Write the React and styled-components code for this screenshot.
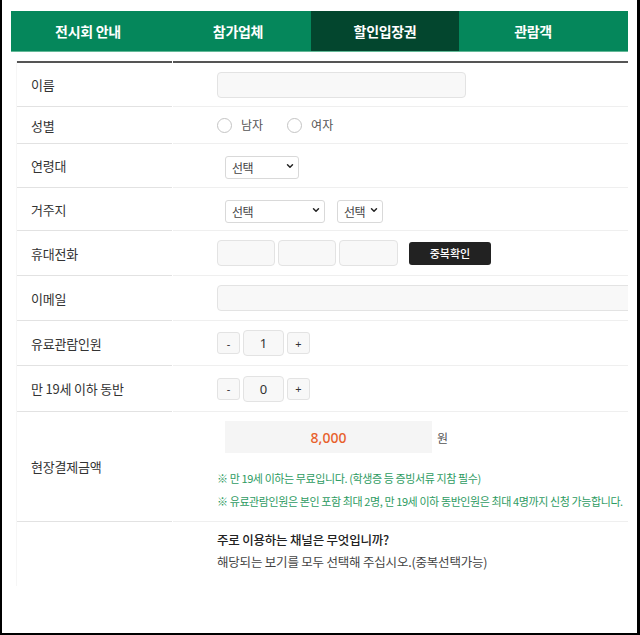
import React from "react";
import styled, { createGlobalStyle } from "styled-components";
import { ChevronDown } from "lucide-react";

const GlobalStyle = createGlobalStyle`
  body {
    margin: 0;
    background: #fff;
    font-family: "Noto Sans CJK KR", "Noto Sans", sans-serif;
  }
  * {
    box-sizing: border-box;
  }
`;

const tabs = [
  { label: "전시회 안내" },
  { label: "참가업체" },
  { label: "할인입장권", active: true },
  { label: "관람객" },
];

const App = () => {
  return (
    <Frame>
      <GlobalStyle />
      <TabBar>
        {tabs.map((t) => (
          <Tab key={t.label} $active={t.active}>
            {t.label}
          </Tab>
        ))}
      </TabBar>

      <Table>
        <Row $first $h={46}>
          <Label>이름</Label>
          <Value>
            <TextInput $w={249} />
          </Value>
        </Row>

        <Row $h={37}>
          <Label>성별</Label>
          <Value>
            <RadioGroup>
              <RadioLabel>
                <Radio type="radio" name="gender" />
                남자
              </RadioLabel>
              <RadioLabel>
                <Radio type="radio" name="gender" />
                여자
              </RadioLabel>
            </RadioGroup>
          </Value>
        </Row>

        <Row $h={44}>
          <Label>연령대</Label>
          <Value>
            <SelectRow>
              <SelectWrap $w={74}>
                <Select>
                  <option>선택</option>
                </Select>
                <ChevronDown size={10} strokeWidth={3.5} />
              </SelectWrap>
            </SelectRow>
          </Value>
        </Row>

        <Row $h={43}>
          <Label>거주지</Label>
          <Value>
            <SelectRow>
              <SelectWrap $w={100}>
                <Select>
                  <option>선택</option>
                </Select>
                <ChevronDown size={10} strokeWidth={3.5} />
              </SelectWrap>
              <SelectWrap $w={46}>
                <Select>
                  <option>선택</option>
                </Select>
                <ChevronDown size={10} strokeWidth={3.5} />
              </SelectWrap>
            </SelectRow>
          </Value>
        </Row>

        <Row $h={45}>
          <Label>휴대전화</Label>
          <Value>
            <Inline>
              <TextInput $w={58} />
              <TextInput $w={58} />
              <TextInput $w={59} />
              <DarkButton>중복확인</DarkButton>
            </Inline>
          </Value>
        </Row>

        <Row $h={45}>
          <Label>이메일</Label>
          <Value>
            <TextInput $w={420} />
          </Value>
        </Row>

        <Row $h={45}>
          <Label>유료관람인원</Label>
          <Value>
            <Inline>
              <StepButton>-</StepButton>
              <CountInput defaultValue="1" />
              <StepButton>+</StepButton>
            </Inline>
          </Value>
        </Row>

        <Row $h={46}>
          <Label>만 19세 이하 동반</Label>
          <Value>
            <Inline>
              <StepButton>-</StepButton>
              <CountInput defaultValue="0" />
              <StepButton>+</StepButton>
            </Inline>
          </Value>
        </Row>

        <Row $h={110}>
          <Label>현장결제금액</Label>
          <Value $column $pad="9px">
            <AmountLine>
              <AmountBox>8,000</AmountBox>
              <Unit>원</Unit>
            </AmountLine>
            <Notes>
              <Note>※ 만 19세 이하는 무료입니다. (학생증 등 증빙서류 지참 필수)</Note>
              <Note>
                ※ 유료관람인원은 본인 포함 최대 2명, 만 19세 이하 동반인원은 최대
                4명까지 신청 가능합니다.
              </Note>
            </Notes>
          </Value>
        </Row>

        <Row $last $h={64}>
          <Label />
          <Value $column $pad="7px">
            <Question>주로 이용하는 채널은 무엇입니까?</Question>
            <Hint>해당되는 보기를 모두 선택해 주십시오.(중복선택가능)</Hint>
          </Value>
        </Row>
      </Table>
    </Frame>
  );
};

const Frame = styled.div`
  width: 640px;
  height: 635px;
  border-left: 2px solid #000;
  border-right: 3px solid #000;
  border-bottom: 2px solid #000;
  padding: 11px 8px 0 9px;
  overflow: hidden;
`;

const TabBar = styled.div`
  display: grid;
  grid-template-columns: 154px 146px 148px 148px;
  width: 617px;
  background: #05875b;
  border-bottom: 1px solid #62b896;
`;

const Tab = styled.div`
  height: 40px;
  display: flex;
  align-items: center;
  justify-content: center;
  color: #fff;
  font-size: 14px;
  font-weight: 700;
  letter-spacing: -0.3px;
  background: ${(p) => (p.$active ? "#03462e" : "transparent")};
`;

const Table = styled.div`
  margin: 9px 0 0 5px;
  width: 612px;
  border-left: 1px solid #f6f6f6;
`;

const Row = styled.div`
  display: grid;
  grid-template-columns: 155px 1fr;
  column-gap: 1px;

  & > div {
    height: ${(p) => p.$h}px;
    border-top: ${(p) => (p.$first ? "2px solid #555" : "none")};
    border-bottom: ${(p) => (p.$last ? "none" : "1px solid #efefef")};
  }
  & > div:first-child {
    border-bottom-color: #e2e2e2;
  }
`;

const Label = styled.div`
  display: flex;
  align-items: center;
  padding-left: 14px;
  font-size: 13px;
  color: #333;
  letter-spacing: -0.2px;
`;

const Value = styled.div`
  display: flex;
  flex-direction: ${(p) => (p.$column ? "column" : "row")};
  align-items: ${(p) => (p.$column ? "flex-start" : "center")};
  padding-top: ${(p) => p.$pad || "0"};
  padding-left: 44px;
  min-width: 0;
  overflow: hidden;
`;

const TextInput = styled.input`
  width: ${(p) => p.$w}px;
  height: 26px;
  flex-shrink: 0;
  background: #f8f8f8;
  border: 1px solid #e3e3e3;
  border-radius: 4px;
  outline: none;
`;

const Inline = styled.div`
  display: flex;
  align-items: center;
  gap: 3px;
`;

const RadioGroup = styled.div`
  display: flex;
  align-items: center;
  gap: 24px;
`;

const RadioLabel = styled.label`
  display: flex;
  align-items: center;
  gap: 9px;
  font-size: 12px;
  line-height: 16px;
  color: #555;
`;

const Radio = styled.input`
  appearance: none;
  margin: 0;
  width: 15px;
  height: 15px;
  border: 1px solid #c4c4c4;
  border-radius: 50%;
  background: #fff;
`;

const SelectRow = styled.div`
  display: flex;
  align-items: center;
  gap: 12px;
  margin-left: 8px;
`;

const SelectWrap = styled.div`
  position: relative;
  width: ${(p) => p.$w}px;
  height: 23px;

  svg {
    position: absolute;
    right: 4px;
    top: 7px;
    color: #222;
    pointer-events: none;
  }
`;

const Select = styled.select`
  appearance: none;
  width: 100%;
  height: 100%;
  padding: 0 0 0 6px;
  border: 1px solid #d9d9d9;
  border-radius: 3px;
  background: #fff;
  font-family: "Noto Sans CJK KR", sans-serif;
  font-size: 12px;
  letter-spacing: -0.5px;
  color: #444;
  outline: none;
`;

const DarkButton = styled.button`
  margin-left: 8px;
  width: 82px;
  height: 23px;
  border: none;
  border-radius: 3px;
  background: #222;
  color: #fff;
  font-family: "Noto Sans CJK KR", sans-serif;
  font-size: 11px;
  font-weight: 500;
`;

const StepButton = styled.button`
  width: 23px;
  height: 22px;
  padding: 0;
  border: 1px solid #e3e3e3;
  border-radius: 3px;
  background: #f8f8f8;
  color: #333;
  font-family: "Noto Sans", sans-serif;
  font-size: 11px;
`;

const CountInput = styled.input`
  width: 41px;
  height: 26px;
  border: 1px solid #e3e3e3;
  border-radius: 4px;
  background: #f8f8f8;
  text-align: center;
  font-family: "Noto Sans", sans-serif;
  font-size: 13px;
  color: #333;
  outline: none;
`;

const AmountLine = styled.div`
  display: flex;
  align-items: center;
  gap: 5px;
  margin-left: 8px;
`;

const AmountBox = styled.div`
  width: 207px;
  height: 32px;
  display: flex;
  align-items: center;
  justify-content: center;
  background: #f5f5f5;
  color: #e8612c;
  font-family: "Noto Sans", sans-serif;
  font-size: 14px;
  font-weight: 500;
`;

const Unit = styled.span`
  font-size: 12px;
  color: #555;
`;

const Notes = styled.div`
  margin-top: 14px;
  display: flex;
  flex-direction: column;
`;

const Note = styled.p`
  margin: 0;
  line-height: 23px;
  font-size: 11px;
  color: #2e9b62;
  letter-spacing: -0.4px;
  white-space: nowrap;
`;

const Question = styled.p`
  margin: 0;
  line-height: 22px;
  font-size: 12.5px;
  font-weight: 500;
  color: #222;
  letter-spacing: -0.2px;
`;

const Hint = styled.p`
  margin: 0;
  line-height: 22px;
  font-size: 12.5px;
  color: #444;
  letter-spacing: -0.2px;
`;

export default App;
